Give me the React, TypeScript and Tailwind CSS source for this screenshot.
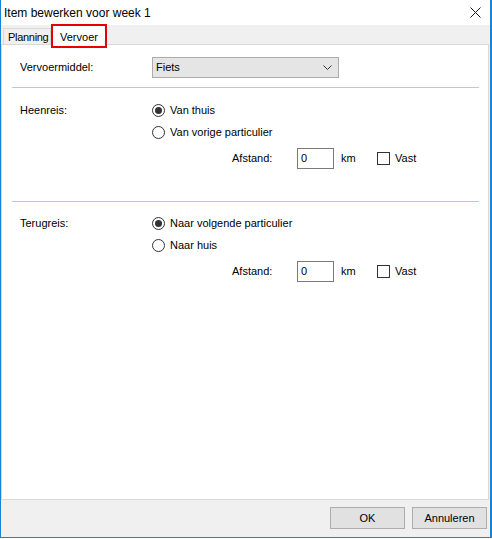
import React from "react";

const font = { fontFamily: '"Liberation Sans", Arial, sans-serif' };

function Radio({ checked, label }: { checked?: boolean; label: string }) {
  return (
    <div className="flex h-[22px] items-center">
      <span className="flex h-[13px] w-[13px] items-center justify-center rounded-full border border-[#333333] bg-white">
        {checked && <span className="h-[7px] w-[7px] rounded-full bg-[#333333]" />}
      </span>
      <span className="ml-[5px]">{label}</span>
    </div>
  );
}

function AfstandRow({ className }: { className: string }) {
  return (
    <div className={"flex h-[21px] items-center " + className}>
      <span className="ml-[80px] w-[65px]">Afstand:</span>
      <div className="flex h-[21px] w-[37px] items-center border border-[#7a7a7a] bg-white pl-[3px]">0</div>
      <span className="ml-[7px] w-[36px]">km</span>
      <span className="h-[13px] w-[13px] border border-[#333333] bg-white" />
      <span className="ml-[5px]">Vast</span>
    </div>
  );
}

export default function App() {
  return (
    <div className="h-[539px] w-[492px] bg-white text-[11px] text-black" style={font}>
      <div className="flex h-[538px] flex-col border-b border-l border-r-2 border-[#1883d7] bg-[#f0f0f0]">
        {/* title bar */}
        <div className="flex h-[25px] items-center justify-between bg-white pl-[3px] pr-[8px]">
          <span className="text-[12px]">Item bewerken voor week 1</span>
          <svg width="11" height="11" viewBox="0 0 11 11" className="mr-[1px]">
            <path d="M0.5 0.5 L10.5 10.5 M10.5 0.5 L0.5 10.5" stroke="#111" strokeWidth="1" />
          </svg>
        </div>

        {/* tabs */}
        <div className="flex h-[19px] items-end pl-[2px]">
          <div className="flex h-[16px] w-[48px] items-center border-l border-r border-t border-[#d9d9d9] bg-[#f0f0f0] pl-[4px] pt-[2px] tracking-[-0.3px]">
            Planning
          </div>
          <div className="relative z-10 -mb-[4px] flex h-[24px] w-[56px] items-start border-2 border-[#e60000] bg-white pl-[7px] pt-[3px]">
            Vervoer
          </div>
        </div>

        {/* panel */}
        <div className="mr-[1px] flex h-[456px] flex-col border border-[#d9d9d9] bg-white">
          <div className="mt-[12px] flex h-[21px] items-center pl-[18px]">
            <span className="w-[132px]">Vervoermiddel:</span>
            <div className="flex h-[21px] w-[187px] items-center justify-between border border-[#acacac] bg-[#e5e5e5] pl-[3px] pr-[6px]">
              <span>Fiets</span>
              <svg width="9" height="5" viewBox="0 0 9 5">
                <path d="M0.5 0.5 L4.5 4.5 L8.5 0.5" stroke="#333" fill="none" strokeWidth="1" />
              </svg>
            </div>
          </div>

          <div className="ml-[10px] mt-[9px] h-px w-[467px] bg-[#a3d3dd]" />

          <div className="mt-[11px] flex pl-[18px]">
            <span className="flex h-[22px] w-[132px] items-center">Heenreis:</span>
            <div className="flex flex-col">
              <Radio checked label="Van thuis" />
              <Radio label="Van vorige particulier" />
            </div>
          </div>
          <AfstandRow className="mt-[5px] pl-[150px]" />

          <div className="ml-[10px] mt-[32px] h-px w-[467px] bg-[#a3d3dd]" />

          <div className="mt-[10px] flex pl-[18px]">
            <span className="flex h-[22px] w-[132px] items-center">Terugreis:</span>
            <div className="flex flex-col">
              <Radio checked label="Naar volgende particulier" />
              <Radio label="Naar huis" />
            </div>
          </div>
          <AfstandRow className="mt-[5px] pl-[150px]" />
        </div>

        {/* buttons */}
        <div className="flex flex-1 items-start justify-end gap-[7px] pr-[3px] pt-[7px]">
          <button className="flex h-[22px] w-[75px] items-center justify-center border border-[#adadad] bg-[#e1e1e1]">OK</button>
          <button className="flex h-[22px] w-[75px] items-center justify-center border border-[#adadad] bg-[#e1e1e1]">Annuleren</button>
        </div>
      </div>
    </div>
  );
}
